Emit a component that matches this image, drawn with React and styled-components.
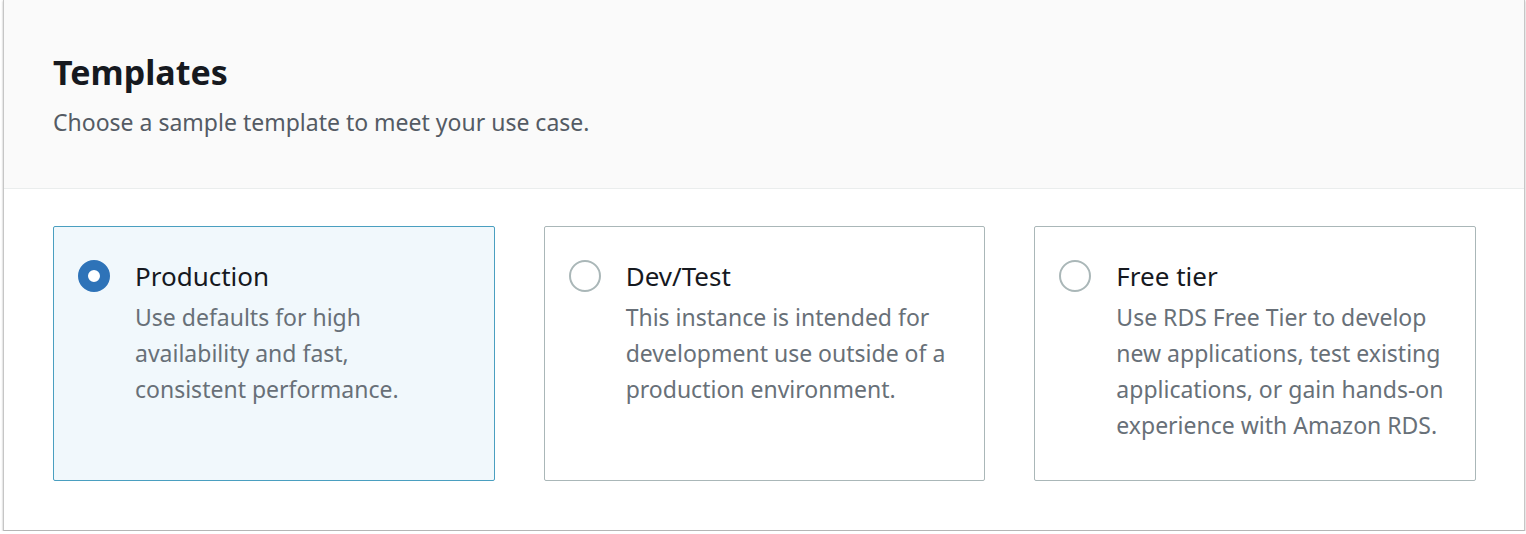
import React from "react";
import styled, { createGlobalStyle } from "styled-components";

const GlobalStyle = createGlobalStyle`
   body {
      margin: 0;
      background: #ffffff;
      font-family: "Noto Sans", "Liberation Sans", sans-serif;
   }
`;

const Panel = styled("section")`
   margin: 0 0 0 3px;
   width: 1522px;
   height: 531px;
   box-sizing: border-box;
   border: 1px solid #c6c6c6;
   border-top: none;
   border-bottom-color: #b5b5b5;
   background-color: #fff;
   box-shadow: 0 1px 2px rgba(0, 0, 0, 0.3);
   display: flex;
   flex-direction: column;
`;

const Header = styled("header")`
   background-color: #fafafa;
   height: 189px;
   box-sizing: border-box;
   border-bottom: 1px solid #eaeded;
   padding: 52px 49px 0;
`;

const Title = styled("h2")`
   margin: 0;
   font-size: 34px;
   line-height: 40px;
   font-weight: 700;
   color: #16191f;
`;

const Subtitle = styled("p")`
   margin: 14px 0 0;
   font-size: 23px;
   line-height: 32px;
   color: #545b64;
`;

const Options = styled("div")`
   display: grid;
   grid-template-columns: repeat(3, 1fr);
   column-gap: 49px;
   padding: 37px 48px 0 49px;
`;

const Card = styled("label")`
   display: flex;
   gap: 25px;
   height: 255px;
   box-sizing: border-box;
   padding: 30px 24px;
   border: 1px solid ${p => (p.selected ? "#4a9fc0" : "#aab7b8")};
   border-radius: 2px;
   background-color: ${p => (p.selected ? "#f1f8fc" : "#fff")};
   cursor: pointer;
`;

const Radio = styled("span")`
   flex: none;
   width: 32px;
   height: 32px;
   margin-top: 3px;
   box-sizing: border-box;
   border-radius: 50%;
   border: ${p => (p.checked ? "10px solid #2e73b8" : "2px solid #aab7b8")};
   background-color: #fff;
`;

const Body = styled("div")`
   display: flex;
   flex-direction: column;
`;

const OptionTitle = styled("span")`
   font-size: 26px;
   line-height: 38px;
   margin-bottom: 4px;
   color: #16191f;
`;

const OptionText = styled("span")`
   font-size: 23px;
   line-height: 36px;
   color: #687078;
`;

const templates = [
   {
      id: "production",
      title: "Production",
      text: ["Use defaults for high", "availability and fast,", "consistent performance."]
   },
   {
      id: "devtest",
      title: "Dev/Test",
      text: ["This instance is intended for", "development use outside of a", "production environment."]
   },
   {
      id: "free",
      title: "Free tier",
      text: [
         "Use RDS Free Tier to develop",
         "new applications, test existing",
         "applications, or gain hands-on",
         "experience with Amazon RDS."
      ]
   }
];

const App = () => {
   const [selected, setSelected] = React.useState("production");

   return (
      <>
         <GlobalStyle />
         <Panel>
            <Header>
               <Title>Templates</Title>
               <Subtitle>Choose a sample template to meet your use case.</Subtitle>
            </Header>
            <Options>
               {templates.map(t => (
                  <Card
                     key={t.id}
                     selected={selected === t.id}
                     onClick={() => setSelected(t.id)}
                  >
                     <Radio checked={selected === t.id} />
                     <Body>
                        <OptionTitle>{t.title}</OptionTitle>
                        {t.text.map(line => (
                           <OptionText key={line}>{line}</OptionText>
                        ))}
                     </Body>
                  </Card>
               ))}
            </Options>
         </Panel>
      </>
   );
};

export default App;
